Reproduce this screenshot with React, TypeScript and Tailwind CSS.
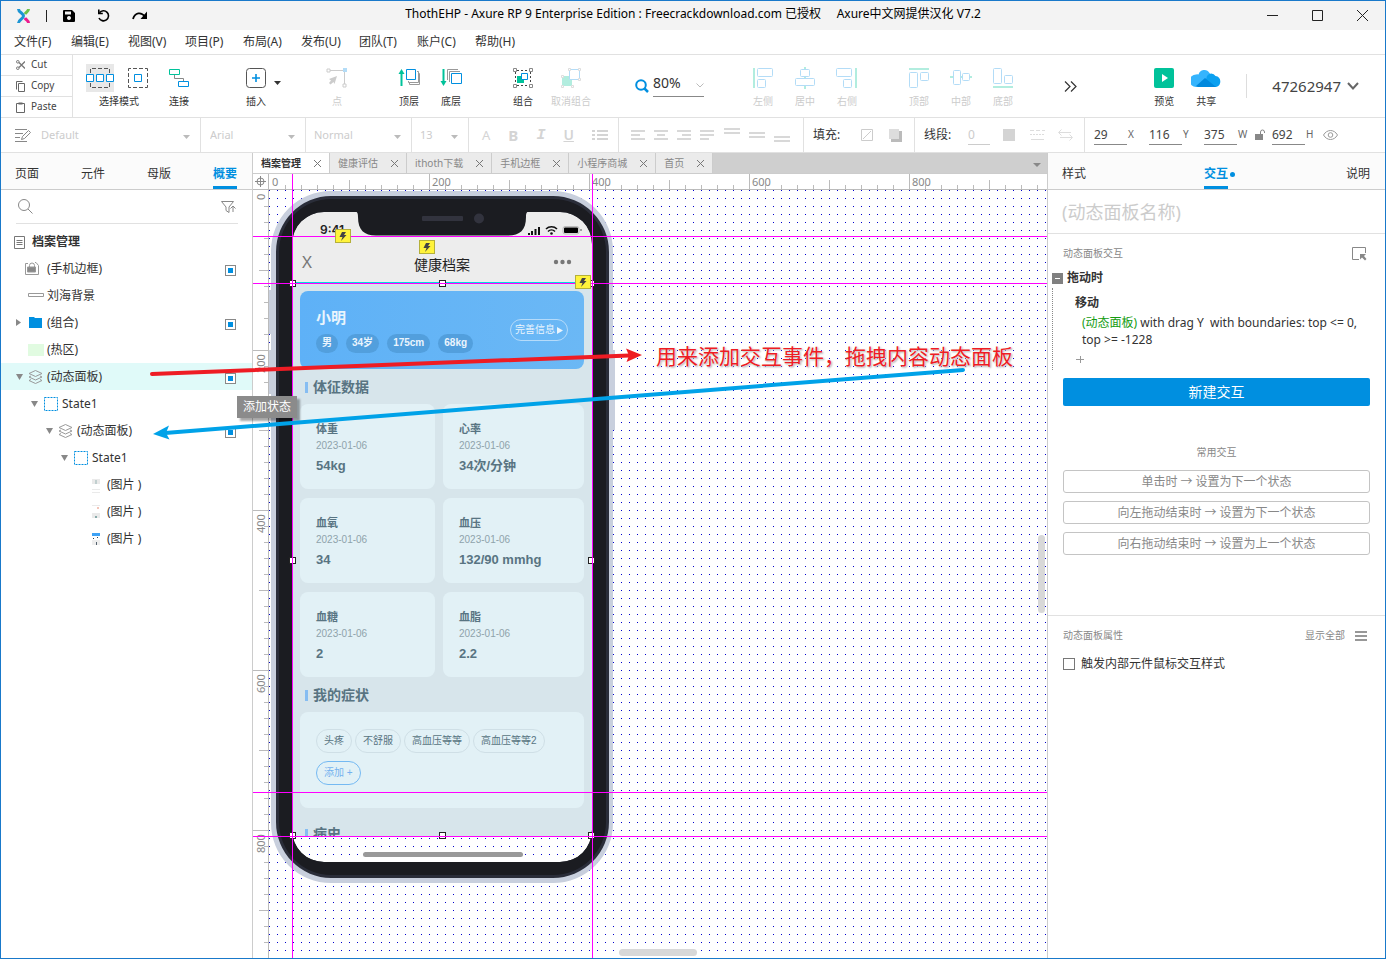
import React from 'react';

type P = { children?: React.ReactNode };

const Bar = ({ className }: { className: string }) => <div className={`shrink-0 ${className}`} />;

function TitleBar() {
  return (
    <header className="relative flex h-[29px] shrink-0 items-center bg-[#f3f3f3] px-4 text-black">
      <svg width="13" height="16" viewBox="0 0 13 16" fill="none" strokeWidth="3">
        <path d="M1.500 1c0 3.500 5 4 5 7s-5 3.500-5 7" stroke="#1d95d3" />
        <path d="M11.500 1c0 2.500-2.500 3-3.500 5" stroke="#6cc24a" />
        <path d="M11.500 15c0-2.500-2.500-3-3.500-5" stroke="#ec1c8e" />
      </svg>
      <Bar className="ml-4 h-3 w-px bg-[#222]" />
      <button aria-label="保存" className="ml-4">
        <svg width="12" height="12" viewBox="0 0 12 12">
          <path fillRule="evenodd" d="M1 0h8l3 3v8a1 1 0 0 1-1 1H1a1 1 0 0 1-1-1V1a1 1 0 0 1 1-1zM2 1.500v3h6v-3zM6 6a2 2 0 1 0 .01 0z" fill="#000" />
        </svg>
      </button>
      <button aria-label="撤销" className="ml-[22px]">
        <svg width="13" height="13" viewBox="0 0 13 13" fill="none" stroke="#000" strokeWidth="1.600">
          <path d="M2.500 3.800A5 5 0 1 1 2 9" />
          <path d="M1.800.5v4h4" />
        </svg>
      </button>
      <button aria-label="重做" className="ml-[22px]">
        <svg width="16" height="9" viewBox="0 0 16 9" fill="none" stroke="#000" strokeWidth="1.800">
          <path d="M1 8C3 1.500 9 .5 13 5.500" />
          <path d="M15 .5V8H8.500z" fill="#000" stroke="none" />
        </svg>
      </button>
      <h1 className="pointer-events-none absolute inset-x-0 top-0 flex h-[26px] items-center justify-center whitespace-pre text-xs">
        {'ThothEHP - Axure RP 9 Enterprise Edition : Freecrackdownload.com 已授权     Axure中文网提供汉化 V7.2'}
      </h1>
      <div className="ml-auto flex items-center gap-[34px] pr-px">
        <button aria-label="最小化"><svg width="11" height="11"><path d="M0 5.500h11" stroke="#222" /></svg></button>
        <button aria-label="最大化"><svg width="11" height="11"><path d="M.5.5h10v10H.5z" stroke="#222" fill="none" /></svg></button>
        <button aria-label="关闭"><svg width="11" height="11"><path d="M0 0l11 11M11 0L0 11" stroke="#222" /></svg></button>
      </div>
    </header>
  );
}

const menus = ['文件(F)', '编辑(E)', '视图(V)', '项目(P)', '布局(A)', '发布(U)', '团队(T)', '账户(C)', '帮助(H)'];

function MenuBar() {
  return (
    <nav className="flex h-[25px] shrink-0 items-center gap-[17px] border-b border-[#e1e1e1] px-[13px]">
      {menus.map((m, i) => <button key={m} className={`whitespace-nowrap text-left ${i < 3 ? 'w-10' : 'w-[41px]'}`}>{m}</button>)}
    </nav>
  );
}

function Tool({ label, off, children }: P & { label: string; off?: boolean }) {
  return (
    <button disabled={off} className={`flex w-[42px] shrink-0 flex-col items-center gap-px whitespace-nowrap pt-px text-[10px] leading-4 ${off ? 'text-[#ccc]' : 'text-[#333]'}`}>
      <span className="flex h-7 items-center">{children}</span>
      {label}
    </button>
  );
}

const Ico = ({ w = 22, h = 22, children }: P & { w?: number; h?: number }) => (
  <svg width={w} height={h} viewBox={`0 0 ${w} ${h}`} fill="none">{children}</svg>
);

const B = '#008fe0';
const G = '#00c29a';
const LB = '#b3dcf7';
const LG = '#b2eddf';

function ToolBar() {
  return (
    <section className="flex h-[63px] shrink-0 items-center border-b border-[#e1e1e1]">
      <div className="flex h-full w-[72px] shrink-0 flex-col border-r border-[#e1e1e1] text-[10px] text-[#444]">
        <button className="flex flex-1 items-center gap-[6px] border-b border-[#e1e1e1] pl-[15px]">
          <svg width="9" height="10" viewBox="0 0 9 10" fill="none" stroke="#777"><circle cx="1.800" cy="1.800" r="1.300" /><circle cx="1.800" cy="8.200" r="1.300" /><path d="M3 2.500L9 8.500M3 7.500L9 1.500" strokeWidth="1.300" /></svg>
          Cut
        </button>
        <button className="flex flex-1 items-center gap-[6px] border-b border-[#e1e1e1] pl-[15px]">
          <svg width="9" height="11" viewBox="0 0 9 11" fill="none" stroke="#666"><path d="M2.500 2.500h6v8h-6z" /><path d="M.5 8.500v-8h6" /></svg>
          Copy
        </button>
        <button className="flex flex-1 items-center gap-[6px] pl-[15px]">
          <svg width="9" height="11" viewBox="0 0 9 11" fill="none" stroke="#666"><path d="M.5 1.500h8v9h-8z" /><path d="M2.500 1.500h4" strokeWidth="2" /></svg>
          Paste
        </button>
      </div>
      <div className="ml-[13px] flex w-[66px] shrink-0 flex-col items-center gap-px pt-px text-[10px] leading-4 text-[#333]">
        <div className="flex w-full justify-between pr-[3px]">
          <button aria-label="相交选中" className="flex h-7 w-7 items-center bg-[#e8e8e8]">
            <Ico w={28}><path d="M4.500 6V1.500h19V6M4.500 16v4.500h19V16" stroke="#555" strokeDasharray="4 2" /><path d="M.5 7.500h7v7h-7zM10.500 7.500h7v7h-7zM20.500 7.500h7v7h-7z" stroke={B} fill="#fff" /></Ico>
          </button>
          <button aria-label="包含选中" className="flex h-7 items-center">
            <Ico><path d="M4 1.500h-2.500v2.500M18 1.500h2.500v2.500M4 20.500h-2.500v-2.500M18 20.500h2.500v-2.500M6 1.500h4M12 1.500h4M6 20.500h4M12 20.500h4M1.500 6v4M1.500 12v4M20.500 6v4M20.500 12v4" stroke="#555" /><path d="M7.500 7.500h7v7h-7z" stroke={B} /></Ico>
          </button>
        </div>
        选择模式
      </div>
      <div className="ml-[6px] flex">
        <Tool label="连接"><Ico><path d="M1.500 2.500h10v5h-10z" stroke={G} /><path d="M6.500 8v3.500h9V14" stroke="#888" /><path d="M10.500 14.500h10v5h-10z" stroke={B} /></Ico></Tool>
      </div>
      <div className="relative ml-[35px] flex">
        <Tool label="插入"><Ico><rect x="1.500" y="1.500" width="19" height="19" rx="3" stroke="#555" /><path d="M11 7v8M7 11h8" stroke={B} strokeWidth="1.600" /></Ico></Tool>
        <svg className="absolute -right-1 top-[18px]" width="7" height="4"><path d="M0 0h7L3.500 4z" fill="#333" /></svg>
      </div>
      <div className="ml-[39px] flex">
        <Tool label="点" off><Ico><path d="M4 3.500h13M18.500 5v12" stroke="#ccc" /><path d="M1 2h3v3H1zM17 17h3v3h-3z" stroke="#ccc" /><path d="M17 1h4v4h-4z" fill={LB} /><path d="M11 9L3 12l2 1.500L3 16l1.500 1.500L7.500 15l1 2z" fill="#ccc" /></Ico></Tool>
      </div>
      <div className="ml-[30px] flex">
        <Tool label="顶层"><Ico><path d="M3.500 19V5" stroke={G} strokeWidth="2" /><path d="M3.500 2L6.500 7h-6z" fill={G} /><path d="M19 4.500h1.500v11h-10V14M20.500 6.500h1v11h-10v-2" stroke="#999" /><path d="M8.500 2.500h9v10h-9z" stroke={B} fill="#fff" /></Ico></Tool>
        <Tool label="底层"><Ico><path d="M3.500 2v13" stroke={G} strokeWidth="2" /><path d="M3.500 19l-3-5h6z" fill={G} /><path d="M7.500 13V2.500H18M9.500 15V4.500H20" stroke="#999" /><path d="M11.500 6.500h10v10h-10z" stroke={B} fill="#fff" /></Ico></Tool>
      </div>
      <div className="ml-[30px] flex gap-[6px]">
        <Tool label="组合"><Ico><path d="M3.500 5v12M18.500 5v12M5 3.500h12M5 18.500h12" stroke="#444" strokeDasharray="2 2" /><path d="M1.500 1.500h3v3h-3zM17.500 1.500h3v3h-3zM1.500 17.500h3v3h-3zM17.500 17.500h3v3h-3z" stroke="#888" fill="#fff" /><path d="M5 9h7v7H5z" fill={G} /><path d="M9.500 6.500h6v6h-6z" stroke={B} fill="#fff" /></Ico></Tool>
        <Tool label="取消组合" off><Ico><path d="M2 9h10v10H2z" fill={LG} /><path d="M9.500 2.500h10v10h-10z" stroke={LB} fill="#fff" /><path d="M8.500 1.500h2v2h-2zM18.500 1.500h2v2h-2zM18.500 11.500h2v2h-2zM1.500 8.500h2v2h-2zM1.500 18.500h2v2h-2zM11.500 18.500h2v2h-2z" stroke="#ddd" fill="#fff" /></Ico></Tool>
      </div>
      <div className="ml-[43px] flex items-center gap-1">
        <svg width="14" height="14" viewBox="0 0 14 14" fill="none" stroke={B} strokeWidth="2"><circle cx="6" cy="6" r="4.800" /><path d="M9.500 9.500L13 13" strokeWidth="2.500" /></svg>
        <div className="flex h-[22px] w-[51px] items-center justify-between border-b border-[#888] text-sm text-[#333]">
          <input aria-label="缩放" defaultValue="80%" className="mb-[6px] w-9 bg-transparent outline-none" />
          <svg width="8" height="5"><path d="M.5.5L4 4 7.500.5" stroke="#bbb" fill="none" /></svg>
        </div>
      </div>
      <div className="ml-[38px] flex">
        <Tool label="左侧" off><Ico><path d="M2 1v20" stroke={LG} strokeWidth="2" /><rect x="5.500" y="1.500" width="15" height="8" rx="1" stroke={LB} /><rect x="5.500" y="12.500" width="8" height="8" rx="1" stroke={LB} /></Ico></Tool>
        <Tool label="居中" off><Ico><path d="M11 0v22" stroke={LG} strokeWidth="2" /><rect x="6.500" y="2.500" width="9" height="7" rx="1" stroke={LB} fill="#fff" /><rect x="1.500" y="11.500" width="19" height="7" rx="1" stroke={LB} fill="#fff" /></Ico></Tool>
        <Tool label="右侧" off><Ico><path d="M20 1v20" stroke={LG} strokeWidth="2" /><rect x=".5" y="1.500" width="15" height="8" rx="1" stroke={LB} /><rect x="7.500" y="12.500" width="8" height="8" rx="1" stroke={LB} /></Ico></Tool>
      </div>
      <div className="ml-[30px] flex">
        <Tool label="顶部" off><Ico><path d="M1 2h20" stroke={LG} strokeWidth="2" /><rect x="1.500" y="5.500" width="8" height="15" rx="1" stroke={LB} /><rect x="12.500" y="5.500" width="8" height="8" rx="1" stroke={LB} /></Ico></Tool>
        <Tool label="中部" off><Ico><path d="M0 10h22" stroke={LG} strokeWidth="2" /><rect x="3.500" y="3.500" width="7" height="14" rx="1" stroke={LB} fill="#fff" /><rect x="12.500" y="6.500" width="7" height="7" rx="1" stroke={LB} fill="#fff" /></Ico></Tool>
        <Tool label="底部" off><Ico><path d="M1 20h20" stroke={LG} strokeWidth="2" /><rect x="1.500" y="1.500" width="8" height="15" rx="1" stroke={LB} /><rect x="12.500" y="8.500" width="8" height="8" rx="1" stroke={LB} /></Ico></Tool>
      </div>
      <button aria-label="更多工具" className="ml-10"><svg width="13" height="11" viewBox="0 0 13 11" fill="none" stroke="#333" strokeWidth="1.200"><path d="M1 .5l5 5-5 5M7 .5l5 5-5 5" /></svg></button>
      <div className="ml-auto flex items-center pr-[26px]">
        <Tool label="预览"><svg width="20" height="20"><rect width="20" height="20" rx="2" fill="#00c29a" /><path d="M8 6l6 4-6 4z" fill="#fff" /></svg></Tool>
        <Tool label="共享">
          <svg width="30" height="20" viewBox="0 0 30 20"><path d="M5 19a5.500 5.500 0 0 1 0-12.500 6 6 0 0 1 2.500 0A6 6 0 0 1 18.500 5L22 9l-8 10z" fill="#35b4fd" /><path d="M16 8a4.800 4.800 0 0 1 8.500 0 5.600 5.600 0 0 1 .5 11H13z" fill="#0ba0f0" /><path d="M5 18l9-8 11 9H7z" fill="#0088dd" /></svg>
        </Tool>
        <Bar className="ml-[19px] h-6 w-px bg-[#ddd]" />
        <button className="ml-[25px] flex items-center gap-[6px] text-[15px] text-[#444]">47262947
          <svg width="12" height="8" viewBox="0 0 12 8"><path d="M1 1l5 5.500L11 1" fill="none" stroke="#666" strokeWidth="2" /></svg>
        </button>
      </div>
    </section>
  );
}

function Drop({ label, value, className }: { label: string; value: string; className: string }) {
  return (
    <label className={`relative flex h-full shrink-0 items-center border-r border-[#e1e1e1] ${className}`}>
      <select aria-label={label} defaultValue={value} className="min-w-0 flex-1 appearance-none bg-transparent text-[11px] text-[#ccc] outline-none"><option>{value}</option></select>
      <svg width="7" height="4" className="mr-[10px] mt-1 shrink-0"><path d="M0 0h7L3.500 4z" fill="#bbb" /></svg>
    </label>
  );
}

const Lines = ({ d, w = 14 }: { d: string; w?: number }) => (
  <button aria-label="对齐"><svg width={w} height="14" fill="none" stroke="#d8d8d8" strokeWidth="2"><path d={d} /></svg></button>
);

function Num({ id, v }: { id: string; v: string }) {
  return (
    <label className="flex items-center gap-[1px] text-[10px] text-[#666]">
      <input aria-label={id} defaultValue={v} className="h-[19px] w-[33px] border-b border-[#888] bg-transparent text-xs text-[#444] outline-none" />
      {id}
    </label>
  );
}

function StyleBar() {
  return (
    <section className="flex h-[35px] shrink-0 items-center border-b border-[#e1e1e1] text-[#d4d4d4]">
      <div className="flex h-full w-[200px] shrink-0 items-center">
        <svg width="16" height="13" viewBox="0 0 16 13" fill="none" stroke="#888" className="ml-[14px]"><path d="M0 .5h12M0 4.500h8M0 8.500h5M0 12.500h12" /><path d="M6.500 10.500l1-3 6-6 2 2-6 6z" /></svg>
        <Drop label="样式" value="Default" className="ml-[10px] flex-1" />
      </div>
      <Drop label="字体" value="Arial" className="w-[105px] pl-[9px]" />
      <Drop label="字重" value="Normal" className="w-[106px] pl-2" />
      <Drop label="字号" value="13" className="w-[57px] pl-2" />
      <div className="flex h-full w-[150px] shrink-0 items-center justify-between border-r border-[#e1e1e1] pl-[13px] pr-[10px] text-[15px] leading-none">
        <button className="text-[13px]">A</button>
        <button className="font-bold">B</button>
        <button className="font-['Liberation_Mono'] font-bold italic">I</button>
        <button className="text-sm font-semibold underline">U</button>
        <button aria-label="项目符号"><svg width="16" height="12" stroke="#d4d4d4" strokeWidth="2"><path d="M0 2h3M5 2h11M0 6h3M5 6h11M0 10h3M5 10h11" /></svg></button>
      </div>
      <div className="flex h-full w-[185px] shrink-0 items-center justify-between border-r border-[#e1e1e1] pl-3 pr-[13px]">
        <Lines d="M0 3h14M0 7h9M0 11h14" />
        <Lines d="M0 3h14M3 7h8M0 11h14" />
        <Lines d="M0 3h14M5 7h9M0 11h14" />
        <Lines d="M0 3h14M0 7h14M0 11h9" />
        <Lines w={16} d="M0 1h16M0 5h16" />
        <Lines w={16} d="M0 5h16M0 9h16" />
        <Lines w={16} d="M0 9h16M0 13h16" />
      </div>
      <div className="flex h-full w-[111px] shrink-0 items-center border-r border-[#e1e1e1] pl-[9px] text-xs text-[#333]">
        <span className="w-12">填充:</span>
        <button aria-label="填充颜色"><svg width="12" height="12" stroke="#ccc" fill="none"><path d="M.5.5h11v11H.5zM2 10l8-8" /></svg></button>
        <button aria-label="阴影" className="ml-4"><svg width="13" height="13"><path d="M2 2h11v11H2z" fill="#bbb" /><path d="M0 0h10v10H0z" fill="#ddd" /></svg></button>
      </div>
      <div className="flex h-full w-[170px] shrink-0 items-center border-r border-[#e1e1e1] pl-[9px] text-xs text-[#333]">
        <label htmlFor="stroke" className="w-11">线段:</label>
        <input id="stroke" defaultValue="0" className="h-[19px] w-[22px] border-b border-[#ccc] text-[#ccc] outline-none" />
        <button aria-label="线段颜色" className="ml-[13px] h-3 w-3 bg-[#d4d4d4]" />
        <button aria-label="线型" className="ml-[15px]"><svg width="15" height="12" stroke="#ddd"><path d="M0 1.500h15" strokeDasharray="4 2" /><path d="M0 5.500h15" strokeDasharray="2 1" /><path d="M1 10.500h13" /></svg></button>
        <button aria-label="箭头" className="ml-[13px]"><svg width="15" height="12" stroke="#ddd" fill="none"><path d="M3.500.5l-3 3 3 3M1 3.500h12M11.500 5.500l3 3-3 3M2 8.500h12" /></svg></button>
      </div>
      <div className="flex h-full items-center pl-[9px]">
        <div className="w-[55px]"><Num id="X" v="29" /></div>
        <div className="w-[55px]"><Num id="Y" v="116" /></div>
        <div className="w-[51px]"><Num id="W" v="375" /></div>
        <svg width="11" height="12" className="mr-[6px] shrink-0"><path d="M0 5h8v6H0z" fill="#888" /><path d="M5.500 5V3a2 2 0 0 1 4 0v1" stroke="#888" fill="none" /></svg>
        <div className="w-[51px]"><Num id="H" v="692" /></div>
        <button aria-label="可见性"><svg width="15" height="10" viewBox="0 0 15 10" fill="none" stroke="#999"><path d="M.5 5C4-1 11-1 14.500 5 11 11 4 11 .5 5z" /><circle cx="7.500" cy="5" r="2.300" /></svg></button>
      </div>
    </section>
  );
}

type Kind = 'lock' | 'rect' | 'folder' | 'hot' | 'panel' | 'state' | 'img1' | 'img2' | 'img3';
const NodeIcon = ({ kind }: { kind: Kind }) => {
  switch (kind) {
    case 'lock': return <svg width="14" height="13" className="mr-2" fill="none" stroke="#999"><path d="M3 1.500H.5v11h13v-9L11 .5H10" /><path d="M4.500 5V3.500a2.500 2.500 0 0 1 5 0V5" /><path d="M2.500 5h8v5h-8z" fill="#888" /></svg>;
    case 'rect': return <svg width="16" height="5" fill="none"><path d="M.5.5h15v3H.5z" stroke="#999" /></svg>;
    case 'folder': return <svg width="13" height="11" className="mr-px"><path d="M0 0h5l1 1h7v10H0z" fill={B} /></svg>;
    case 'hot': return <svg width="16" height="12"><path d="M0 0h16v12H0z" fill="#e1fbe1" /></svg>;
    case 'panel': return <svg width="15" height="14" viewBox="0 0 15 14" className="mr-px" fill="none" stroke="#999"><path d="M7.500.5l6.500 3-6.500 3L1 3.500zM3 6L1 7l6.500 3L14 7l-2-1M3 9.500l-2 1 6.500 3 6.500-3-2-1" /></svg>;
    case 'state': return <svg width="14" height="14" fill="none"><path d="M.5.5h13v13H.5z" stroke={B} strokeDasharray="2 1" /></svg>;
    case 'img1': return <svg width="8" height="16"><path d="M3 3h2v4H3z" fill="#c5d8d8" /><path d="M0 2h8v5H0zM0 12h8v1H0zM0 15h8v1H0z" fill="#bbb" opacity=".3" /></svg>;
    case 'img2': return <svg width="8" height="16"><path d="M5 3h2v2H5z" fill="#f3c4b8" /><path d="M0 1h8v1H0zM0 9h8v5H0z" fill="#bbb" opacity=".3" /><path d="M3 12h2v2H3z" fill="#8aa" /></svg>;
    default: return <svg width="8" height="14"><path d="M0 1h8v3H0z" fill="#3ea2f5" /><path d="M1 6h1v1H1zM5 5h1v1H5zM4 10h1v3H4z" fill="#345" /><path d="M0 8h8v5H0z" fill="#bbb" opacity=".25" /></svg>;
  }
};

const nodes: { t: string; k: Kind; pad: string; open?: 'r' | 'd'; mark?: boolean; sel?: boolean }[] = [
  { t: '(手机边框)', k: 'lock', pad: 'pl-[14px]', mark: true },
  { t: '刘海背景', k: 'rect', pad: 'pl-[14px]' },
  { t: '(组合)', k: 'folder', pad: 'pl-[14px]', open: 'r', mark: true },
  { t: '(热区)', k: 'hot', pad: 'pl-[14px]' },
  { t: '(动态面板)', k: 'panel', pad: 'pl-[14px]', open: 'd', mark: true, sel: true },
  { t: 'State1', k: 'state', pad: 'pl-[29px]', open: 'd' },
  { t: '(动态面板)', k: 'panel', pad: 'pl-[44px]', open: 'd', mark: true },
  { t: 'State1', k: 'state', pad: 'pl-[59px]', open: 'd' },
  { t: '(图片 )', k: 'img1', pad: 'pl-[74px]' },
  { t: '(图片 )', k: 'img2', pad: 'pl-[74px]' },
  { t: '(图片 )', k: 'img3', pad: 'pl-[74px]' },
];

function Outline() {
  return (
    <aside className="w-[252px] shrink-0 border-r border-[#ccc]">
      <div className="flex h-[37px] justify-between border-b border-[#ccc] bg-[#fbfbfb] pl-[14px] pr-[15px]">
        {['页面', '元件', '母版', '概要'].map((t) => (
          <button key={t} className={`flex items-center border-b-[3px] pt-[9px] ${t === '概要' ? 'border-[#008fe0] font-bold text-[#008fe0]' : 'border-transparent'}`}>{t}</button>
        ))}
      </div>
      <label className="ml-[15px] mr-[14px] flex h-[34px] items-center border-b border-[#e1e1e1] px-[2px]">
        <svg width="15" height="15" fill="none" stroke="#888"><circle cx="6" cy="6" r="5.500" /><path d="M10 10l4.500 4.500" /></svg>
        <input aria-label="搜索" className="min-w-0 flex-1 outline-none" />
        <svg width="15" height="12" fill="none" stroke="#888"><path d="M.5.5h12L8 6v5.500l-3-2V6zM12 11V5M9.500 7.500L12 5l2.500 2.500" /></svg>
      </label>
      <ul className="pt-1">
        <li className="flex h-[27px] items-center gap-[7px] pl-[13px] pt-px font-bold">
          <svg width="11" height="13" fill="none" stroke="#777"><path d="M.5.5h10v12H.5zM2.500 4.500h6M2.500 6.500h6M2.500 8.500h6" /></svg>
          档案管理
        </li>
        {nodes.map((n, i) => (
          <li key={i} className={`flex h-[27px] items-center pr-4 ${n.pad} ${n.sel ? 'bg-[#e0faf9]' : ''}`}>
            <span className="flex w-[10px] justify-start">
              {n.open === 'd' && <svg width="8" height="6"><path d="M1 0h7L4.500 6z" fill="#888" /></svg>}
              {n.open === 'r' && <svg width="6" height="8"><path d="M1 0v7l5-3.500z" fill="#888" /></svg>}
            </span>
            <span className="flex w-[22px] justify-center"><NodeIcon kind={n.k} /></span>
            <span className="whitespace-pre">{n.t}</span>
            {n.mark && <span className="ml-auto mt-[3px] flex h-[11px] w-[11px] items-center justify-center border border-[#888] bg-white"><span className="h-[5px] w-[5px] bg-[#008fe0]" /></span>}
          </li>
        ))}
      </ul>
    </aside>
  );
}

const tabs = ['档案管理', '健康评估', 'ithoth下载', '手机边框', '小程序商城', '首页'];

function DocTabs() {
  return (
    <div className="flex h-[21px] shrink-0 border-b border-[#ccc] bg-[#cfcfcf] text-[10px]">
      {tabs.map((t, i) => (
        <div key={t} className={`flex items-center gap-3 whitespace-nowrap border-r border-[#ccc] pl-2 pr-[7px] pt-px ${i ? 'bg-[#ebebeb] text-[#888]' : 'bg-white font-bold text-[#333]'}`}>
          <button>{t}</button>
          <button aria-label="关闭标签" className="px-px"><svg width="7" height="7"><path d="M0 0l7 7M7 0L0 7" stroke="#777" /></svg></button>
        </div>
      ))}
      <button aria-label="标签列表" className="ml-auto mr-[6px] pt-1"><svg width="8" height="4"><path d="M0 0h8L4 4z" fill="#888" /></svg></button>
    </div>
  );
}

const ticks = Array.from({ length: 140 }, (_, i) => i);
const tickLen = (i: number) => (i % 10 === 0 ? 16 : i % 5 === 0 ? 9 : 4);

function Ruler({ vertical }: { vertical?: boolean }) {
  return (
    <svg className="block h-full w-full overflow-hidden bg-white" stroke="#bbb" fontSize="11" fill="none">
      {ticks.map((i) => {
        const p = i * 16 + 0.5;
        return i > 0 && <path key={i} d={vertical ? `M${15 - tickLen(i)} ${p}H15` : `M${p} ${15 - tickLen(i)}V15`} />;
      })}
      {[0, 200, 400, 600, 800].map((v) => (
        <text key={v} stroke="none" fill="#888" x={vertical ? 0 : v * 0.8 + 3} y={vertical ? 0 : 12} transform={vertical ? `translate(12 ${v * 0.8 + (v ? 23 : 10)}) rotate(-90)` : undefined}>{v}</text>
      ))}
    </svg>
  );
}

function Card({ title, value }: { title: string; value: string }) {
  return (
    <div className="h-[85px] rounded-lg bg-[#e2f1f6] px-4 pt-[17px]">
      <div className="text-[11px] font-bold leading-4">{title}</div>
      <div className="text-[10px] leading-[18px] text-[#8fa3ab]">2023-01-06</div>
      <div className="mt-px text-[13px] font-bold leading-5">{value}</div>
    </div>
  );
}

function Heading({ children }: P) {
  return <h2 className="flex h-[35px] items-center gap-[5px] pl-[5px] pt-px text-sm font-bold"><span className="h-[11px] w-[3px] bg-[#86bdf2]" />{children}</h2>;
}

function PhoneScreen() {
  const stats = [['体重', '54kg'], ['心率', '34次/分钟'], ['血氧', '34'], ['血压', '132/90 mmhg'], ['血糖', '2'], ['血脂', '2.2']];
  return (
    <div className="absolute left-[23px] top-[22px] h-[650px] w-[300px] overflow-hidden rounded-[32px] font-['Liberation_Sans','Noto_Sans_CJK_SC',sans-serif]">
      <div className="flex h-6 items-end justify-between bg-[#ededed] pl-7 pr-[10px]">
        <span className="font-['Inter'] text-xs font-semibold leading-none text-[#222]">9:41</span>
        <svg width="55" height="12">
          <path d="M2 11V9M5 11V7M8.500 11V5M12 11V3" stroke="#111" strokeWidth="2" />
          <path d="M19 5c3-3 8-3 11 0M21 7.500c2-2 5-2 7 0" stroke="#111" strokeWidth="1.600" fill="none" /><circle cx="24.500" cy="9.500" r="1.300" fill="#111" />
          <rect x="36" y="2.500" width="16" height="7.500" rx="2" stroke="#bbb" fill="none" /><rect x="37" y="3.500" width="14" height="5.500" rx="1" fill="#000" /><path d="M54 5v2" stroke="#555" />
        </svg>
      </div>
      <div className="flex h-[46px] items-center justify-between bg-[#ededed] px-[10px] pt-[6px]">
        <span className="w-[30px] font-['Noto_Sans'] text-[17px] text-[#777]">X</span>
        <span className="mt-[6px] text-[14px] text-[#222]">健康档案</span>
        <svg width="30" height="6" fill="#777"><circle cx="4" cy="3" r="2.200" /><circle cx="10.500" cy="3" r="2.200" /><circle cx="17" cy="3" r="2.200" /></svg>
      </div>
      <div className="h-[554px] overflow-hidden border-t border-[#00dcdc] bg-[#d7e5eb] px-2 pt-2 text-[#587482]">
        <div className="flex h-[78px] items-center justify-between rounded-lg bg-gradient-to-r from-[#5eb1f7] to-[#6bb8f5] px-4 text-[#eaf5fd]">
          <div>
            <div className="text-[15px] font-bold leading-5">小明</div>
            <div className="mt-[6px] flex gap-2 text-[10px] font-bold">
              {['男', '34岁', '175cm', '68kg'].map((t) => <span key={t} className="flex h-[19px] items-center rounded-full bg-[#529fdd] px-[6px]">{t}</span>)}
            </div>
          </div>
          <button className="flex h-[22px] items-center gap-[2px] whitespace-nowrap rounded-full border border-[#b5dbfa] px-1 text-[10px]">完善信息<svg width="6" height="7"><path d="M0 0v7l6-3.500z" fill="#eaf5fd" /></svg></button>
        </div>
        <Heading>体征数据</Heading>
        <div className="grid grid-cols-[135fr_141fr] gap-x-2 gap-y-[9px]">
          {stats.map(([t, v]) => <Card key={t} title={t} value={v} />)}
        </div>
        <Heading>我的症状</Heading>
        <div className="flex h-[96px] flex-wrap content-start gap-x-[3px] gap-y-2 rounded-lg bg-[#e2f1f6] px-4 pt-[17px] text-[10px]">
          {['头疼', '不舒服', '高血压等等', '高血压等等2'].map((t) => <span key={t} className="flex h-6 items-center whitespace-nowrap rounded-full border border-[#cfdfe6] px-[7px]">{t}</span>)}
          <button className="flex h-6 items-center rounded-full border border-[#74b9f2] px-[7px] text-[#74b2ef]">添加 +</button>
        </div>
        <div className="mt-2"><Heading>病史</Heading></div>
      </div>
    </div>
  );
}

function PhoneFrame() {
  return (
    <svg className="pointer-events-none absolute left-0 top-0" width="350" height="700" viewBox="269 190 350 700">
      <path fillRule="evenodd" fill="#c8cfdd" d="M331 191H553a60 60 0 0 1 60 60V823a60 60 0 0 1-60 60H331a60 60 0 0 1-60-60V251a60 60 0 0 1 60-60zM331 197a54 54 0 0 0-54 54V823a54 54 0 0 0 54 54H553a54 54 0 0 0 54-54V251a54 54 0 0 0-54-54z" />
      <path fill="#c8cfdd" d="M613 350h2v80h-2zM269 290h2v44h-2zM269 350h2v44h-2z" />
      <path fillRule="evenodd" fill="#2a2d39" d="M331 196H553a56 56 0 0 1 56 56V822a56 56 0 0 1-56 56H331a55 56 0 0 1-55-56V252a55 56 0 0 1 55-56zM324 212a32 32 0 0 0-32 32V830a32 32 0 0 0 32 32H560a32 32 0 0 0 32-32V244a32 32 0 0 0-32-32z" />
      <path fillRule="evenodd" fill="#1b1c21" d="M331 199H553a53 53 0 0 1 53 53V822a53 53 0 0 1-53 53H331a52 53 0 0 1-52-53V252a52 53 0 0 1 52-53zM324 212a32 32 0 0 0-32 32V830a32 32 0 0 0 32 32H560a32 32 0 0 0 32-32V244a32 32 0 0 0-32-32z" />
      <path fill="#1b1c21" d="M352 211c5 0 6 1 6 6 0 13 6 18.500 18 18.500H508c12 0 18-5.500 18-18.500 0-5 1-6 6-6z" />
      <rect x="422" y="216" width="41" height="5" rx="1" fill="#32333e" /><circle cx="479" cy="218.500" r="5" fill="#32333e" />
      <rect x="363" y="852" width="160" height="5" rx="2.500" fill="#999" />
    </svg>
  );
}

const Bolt = ({ pos }: { pos: string }) => (
  <span className={`absolute flex h-[14px] w-4 items-center justify-center border border-[#b5b03a] bg-[#fff33b] ${pos}`}>
    <svg width="8" height="9"><path d="M3 0h4L5 3h2.500L2 9l1.500-4H.5z" fill="#444" /></svg>
  </span>
);

const handles = ['left-[36px] top-[106px]', 'left-[186px] top-[106px]', 'left-[335px] top-[106px]', 'left-[36px] top-[383px]', 'left-[335px] top-[383px]', 'left-[36px] top-[658px]', 'left-[186px] top-[658px]', 'left-[335px] top-[658px]'];

function Editor() {
  return (
    <main className="flex min-w-0 flex-1 flex-col">
      <DocTabs />
      <div className="relative grid min-h-0 flex-1 grid-cols-[16px_1fr] grid-rows-[16px_1fr] overflow-hidden">
        <div className="flex items-center justify-center border-b border-r border-[#bbb]">
          <svg width="11" height="11" fill="none" stroke="#888"><circle cx="5.500" cy="5.500" r="3.500" /><path d="M5.500 0v11M0 5.500h11" /></svg>
        </div>
        <div className="overflow-hidden border-b border-[#bbb]"><Ruler /></div>
        <div className="overflow-hidden border-r border-[#bbb]"><Ruler vertical /></div>
        <div className="relative overflow-hidden bg-[conic-gradient(from_270deg_at_1px_1px,#0000cc_90deg,transparent_0)] bg-[length:8px_8px]">
          <PhoneScreen />
          <PhoneFrame />
          <span className="absolute bottom-[2px] left-[350px] h-[7px] w-[78px] rounded bg-[#d8d8d8]" />
          <span className="absolute right-[2px] top-[345px] h-[78px] w-[7px] rounded bg-[#d8d8d8]" />
        </div>
        {handles.map((p) => <span key={p} className={`absolute h-[7px] w-[7px] border border-[#222] bg-white ${p}`} />)}
        <span className="absolute inset-y-0 left-[39px] w-px bg-[#ff00ff]" />
        <span className="absolute inset-y-0 left-[339px] w-px bg-[#ff00ff]" />
        {['top-[62px]', 'top-[109px]', 'top-[618px]', 'top-[662px]'].map((t) => <span key={t} className={`absolute inset-x-0 h-px bg-[#ff00ff] ${t}`} />)}
        <Bolt pos="left-[82px] top-[55px]" />
        <Bolt pos="left-[166px] top-[66px]" />
        <Bolt pos="left-[322px] top-[101px]" />
      </div>
    </main>
  );
}

function Inspector() {
  return (
    <aside className="w-[338px] shrink-0 border-l border-[#ccc]">
      <div className="flex h-[37px] justify-between border-b border-[#ccc] bg-[#fbfbfb] pl-[14px] pr-[15px]">
        {['样式', '交互', '说明'].map((t) => (
          <button key={t} className={`relative flex items-center border-b-[3px] pt-[9px] ${t === '交互' ? 'border-[#008fe0] font-bold text-[#008fe0]' : 'border-transparent'}`}>
            {t}{t === '交互' && <span className="absolute -right-[7px] h-[5px] w-[5px] rounded-full bg-[#008fe0]" />}
          </button>
        ))}
      </div>
      <div className="flex h-11 items-center border-b border-[#e1e1e1] pl-[14px]">
        <input aria-label="名称" placeholder="(动态面板名称)" className="w-full text-lg outline-none placeholder:text-[#ccc]" />
      </div>
      <section className="h-[382px] border-b border-[#e1e1e1] px-[15px] pt-3">
        <div className="flex h-4 items-center justify-between text-[10px] text-[#888]">
          动态面板交互
          <svg width="15" height="14" className="mr-[3px]" fill="none" stroke="#888"><path d="M13.500 6V.5H.5v12H7" /><path d="M8 7h6l-2 2 2.500 3-1.500 1.500-3-3-2 2z" fill="#888" stroke="none" /></svg>
        </div>
        <div className="-ml-[11px] mt-[6px] flex h-5 items-center gap-1 font-bold">
          <button aria-label="折叠" className="flex h-[11px] w-[11px] items-center justify-center bg-[#808080]"><span className="h-px w-[5px] bg-white" /></button>
          拖动时
        </div>
        <div className="-ml-[11px] border-l border-dotted border-[#888] pl-[22px]">
          <div className="pt-1 font-bold leading-[22px]">移动</div>
          <p className="ml-[7px] leading-[17px]"><span className="text-[#149c10]">(动态面板)</span> with drag Y &nbsp;with boundaries: top &lt;= 0, top &gt;= -1228</p>
          <button aria-label="添加" className="ml-[1px] flex h-[22px] items-center"><svg width="8" height="8" stroke="#999"><path d="M0 4.500h8M4.500 1v7" /></svg></button>
        </div>
        <button className="mt-2 h-7 w-full rounded-[2px] bg-[#008fe0] text-sm text-white">新建交互</button>
        <div className="mt-[38px] text-center text-[10px] leading-4 text-[#888]">常用交互</div>
        <div className="mt-[10px] flex flex-col gap-2 text-[#888]">
          {['单击时 → 设置为下一个状态', '向左拖动结束时 → 设置为下一个状态', '向右拖动结束时 → 设置为上一个状态'].map((t) => (
            <button key={t} className="h-[23px] rounded-[3px] border border-[#c4c4c4] leading-none">{t}</button>
          ))}
        </div>
      </section>
      <section className="px-[15px] pt-3">
        <div className="flex h-4 items-center text-[10px] text-[#888]">
          动态面板属性
          <button className="ml-auto flex items-center gap-[10px] pr-[3px]">显示全部<svg width="12" height="10" stroke="#777"><path d="M0 1h12M0 5h12M0 9h12" strokeWidth="1.500" /></svg></button>
        </div>
        <label className="mt-3 flex items-center gap-[6px]">
          <input type="checkbox" className="h-3 w-3 appearance-none border border-[#777]" />
          触发内部元件鼠标交互样式
        </label>
      </section>
    </aside>
  );
}

export default function App() {
  return (
    <div className="flex h-screen flex-col overflow-hidden border border-[#1979ca] bg-white font-['Noto_Sans','Noto_Sans_CJK_SC',sans-serif] text-xs text-[#333]">
      <TitleBar />
      <MenuBar />
      <ToolBar />
      <StyleBar />
      <div className="relative flex min-h-0 flex-1">
        <Outline />
        <Editor />
        <Inspector />
        <div role="tooltip" className="absolute left-[236px] top-[243px] flex h-[22px] items-center bg-[#8b8b8b] px-[6px] text-white shadow-[3px_3px_2px_rgba(0,0,0,0.35)]">添加状态</div>
        <svg className="pointer-events-none absolute left-0 top-0" width="1000" height="300">
          <path d="M151 221L628 202.500" stroke="#ee1c24" strokeWidth="4" strokeLinecap="round" />
          <path d="M641 202L625 195.500l3 7-2.500 6.500z" fill="#ee1c24" />
          <path d="M962 217L164 280" stroke="#00a2e8" strokeWidth="4" strokeLinecap="round" />
          <path d="M152 281l16-8.500-3 7.500 3.500 6.500z" fill="#00a2e8" />
        </svg>
        <div className="pointer-events-none absolute left-[655px] top-[188px] whitespace-nowrap text-[21px] leading-[30px] text-[#ee1c24] [text-shadow:0_0_2px_#fff,1px_1px_2px_#999]">用来添加交互事件，拖拽内容动态面板</div>
      </div>
    </div>
  );
}
